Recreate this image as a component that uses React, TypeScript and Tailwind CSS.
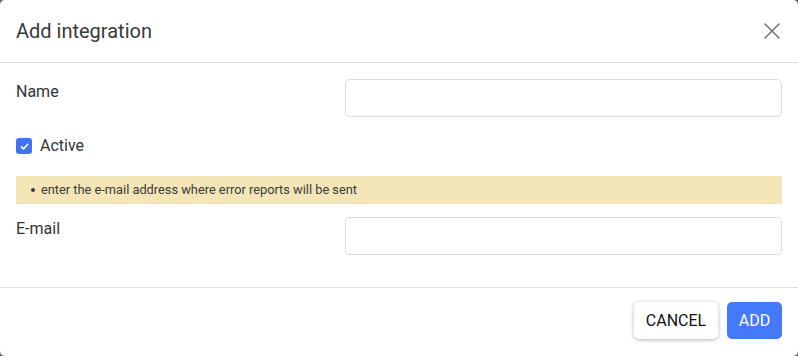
import { X } from "lucide-react";

const App = () => {
  return (
    <div className="w-[798px] h-[356px] bg-[#6b6b6b] font-['Roboto',sans-serif]">
      <div className="w-full h-full bg-white rounded-[5px] flex flex-col text-[#333]">
        {/* header */}
        <div className="h-[63px] flex items-center justify-between pl-4 pr-[12px] border-b border-[#dedede]">
          <h1 className="text-[20px] font-normal text-[#3a3a3a]">Add integration</h1>
          <X className="w-[28px] h-[28px] text-[#777]" strokeWidth={1.4} />
        </div>

        {/* body */}
        <div className="flex-1 px-4 pt-4 flex flex-col">
          <div className="flex justify-between">
            <label className="text-[16px] leading-[24px] pt-[1px]">Name</label>
            <input className="w-[437px] h-[38px] border border-[#dcdcdc] rounded-[5px] outline-none" />
          </div>

          <div className="flex items-center gap-2 mt-[20px]">
            <span className="w-4 h-4 rounded-[3px] bg-[#3f73f0] flex items-center justify-center">
              <svg viewBox="0 0 16 16" className="w-[11px] h-[11px]" fill="none" stroke="white" strokeWidth={2.4} strokeLinecap="round" strokeLinejoin="round">
                <path d="M3.5 8.5l3 3 6-6.5" />
              </svg>
            </span>
            <span className="text-[16px] leading-[18px]">Active</span>
          </div>

          <div className="mt-[21px] h-[28px] bg-[#f4e5b7] flex items-center pl-[15px] text-[12.8px] text-[#3b3b3b]">
            <span className="w-[4px] h-[4px] rounded-full bg-[#3b3b3b] mr-[6px]" />
            enter the e-mail address where error reports will be sent
          </div>

          <div className="flex justify-between mt-[13px]">
            <label className="text-[16px] leading-[24px]">E-mail</label>
            <input className="w-[437px] h-[38px] border border-[#dcdcdc] rounded-[5px] outline-none" />
          </div>
        </div>

        {/* footer */}
        <div className="h-[69px] border-t border-[#dedede] flex items-center justify-end gap-[9px] pr-4 pb-[3px]">
          <button className="h-[37px] w-[84px] bg-white rounded-[5px] shadow-[0_1px_4px_rgba(0,0,0,0.3)] text-[16px] text-[#111]">
            CANCEL
          </button>
          <button className="h-[37px] w-[55px] bg-[#4579fb] rounded-[5px] text-[16px] text-white">
            ADD
          </button>
        </div>
      </div>
    </div>
  );
};

export default App;
